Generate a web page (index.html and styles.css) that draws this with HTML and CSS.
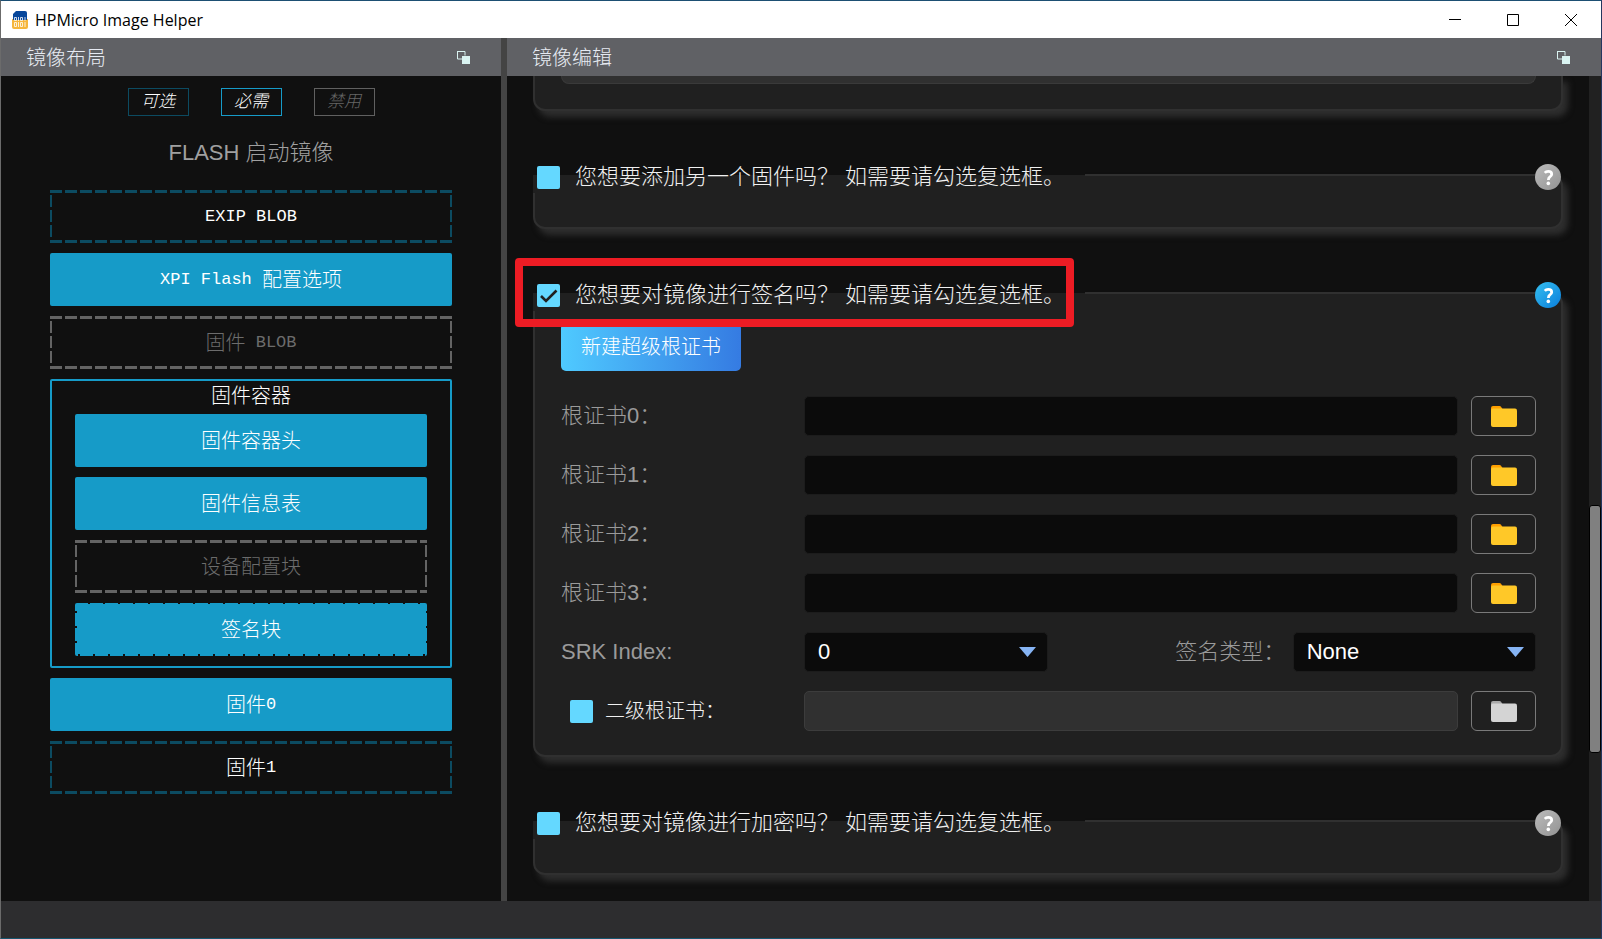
FILE: index.html
```html
<!DOCTYPE html>
<html lang="zh-CN">
<head>
<meta charset="utf-8">
<title>HPMicro Image Helper</title>
<link rel="stylesheet" href="styles.css">
</head>
<body>
<svg class="defs" aria-hidden="true">
  <symbol id="float" viewBox="0 0 13 13">
    <path d="M.5 .5h7.5v4M.5 0v8H5" fill="none" stroke="#d9f3f1"/>
    <path d="M5 5h8v8H5z" fill="#d9f3f1"/>
  </symbol>
  <symbol id="folder" viewBox="0 0 26 21">
    <path class="folder-tab" d="M0 2a2 2 0 0 1 2-2h6.500q1 0 1.500 .8L11.500 3H20v6H0z"/>
    <path class="folder-body" d="M0 4.500Q0 2.500 2 2.500h22q2 0 2 2V19q0 2-2 2H2q-2 0-2-2z"/>
  </symbol>
  <symbol id="help" viewBox="0 0 26 26">
    <path d="M9.800 8.800Q11 7.400 13.200 7.400q3.500 0 3.500 2.800 0 1.500-1.800 2.700-1.500 1.100-1.500 3" fill="none" stroke="#fff" stroke-width="2.800"/>
    <circle cx="13.300" cy="19.400" r="1.800" fill="#fff"/>
  </symbol>
</svg>
<div class="window">
  <header class="titlebar">
    <svg class="app-icon" viewBox="0 0 16 18" aria-hidden="true">
      <path d="M4 0h9q2 0 2 2v6H1V3z" fill="#08479b"/>
      <path d="M0 8h16v8q0 2-2 2H2q-2 0-2-2z" fill="#f6b63c"/>
      <path d="M1 3h14v6H1z" fill="#08479b"/>
      <g fill="none" stroke="#fff" stroke-width=".8">
        <path d="M2.500 6.500h2v3h-2zM6.500 6v4M8.500 6.500h2v3h-2zM13 6v4M2.500 11.500h2v4h-2zM6.500 11v5M8.500 11.500h2v4h-2zM13 11v5"/>
      </g>
    </svg>
    <span class="app-name">HPMicro Image Helper</span>
    <button class="win-btn" aria-label="最小化"><svg width="12" height="12" viewBox="0 0 12 12"><path d="M0 5.500h12" stroke="#000"/></svg></button>
    <button class="win-btn" aria-label="最大化"><svg width="12" height="12" viewBox="0 0 12 12"><path d="M.5 .5h11v11H.5z" fill="none" stroke="#000"/></svg></button>
    <button class="win-btn" aria-label="关闭"><svg width="12" height="12" viewBox="0 0 12 12"><path d="M0 0l12 12M12 0L0 12" stroke="#000"/></svg></button>
  </header>

  <main class="workspace">
    <section class="dock">
      <div class="dock-head">
        <h2 class="dock-title">镜像布局</h2>
        <button class="float-btn" aria-label="浮动"><svg width="13" height="13"><use href="#float"/></svg></button>
      </div>
      <div class="layout-view">
        <div class="legend">
          <span class="tag tag-optional">可选</span>
          <span class="tag tag-required">必需</span>
          <span class="tag tag-disabled">禁用</span>
        </div>
        <h3 class="layout-title">FLASH 启动镜像</h3>
        <div class="blocks">
          <div class="block block-optional"><span class="latin">EXIP BLOB</span></div>
          <div class="block block-filled"><span class="latin">XPI Flash </span>配置选项</div>
          <div class="block block-disabled">固件<span class="latin"> BLOB</span></div>
          <div class="container">
            <div class="container-title">固件容器</div>
            <div class="blocks">
              <div class="block block-filled">固件容器头</div>
              <div class="block block-filled">固件信息表</div>
              <div class="block block-disabled">设备配置块</div>
              <div class="block block-filled block-notched">签名块</div>
            </div>
          </div>
          <div class="block block-filled">固件<span class="latin">0</span></div>
          <div class="block block-optional">固件<span class="latin">1</span></div>
        </div>
      </div>
    </section>

    <div class="splitter"></div>

    <section class="dock">
      <div class="dock-head">
        <h2 class="dock-title">镜像编辑</h2>
        <button class="float-btn" aria-label="浮动"><svg width="13" height="13"><use href="#float"/></svg></button>
      </div>
      <div class="editor">
        <div class="groups">
          <section class="group group-cut"><div class="inner-box"></div></section>

          <section class="group">
            <div class="group-head">
              <label class="group-label"><input class="check" type="checkbox"><span>您想要添加另一个固件吗？</span><span class="hint">如需要请勾选复选框。</span></label>
              <button class="help help-off" aria-label="帮助"><svg width="26" height="26"><use href="#help"/></svg></button>
            </div>
          </section>

          <section class="group">
            <div class="group-head">
              <label class="group-label"><input class="check" type="checkbox" checked><span>您想要对镜像进行签名吗？</span><span class="hint">如需要请勾选复选框。</span></label>
              <button class="help" aria-label="帮助"><svg width="26" height="26"><use href="#help"/></svg></button>
              <div class="marker"></div>
            </div>
            <div class="group-body">
              <button class="primary">新建超级根证书</button>
              <div class="row">
                <label class="field-label" for="c0">根证书0：</label>
                <input class="field" id="c0" type="text">
                <button class="browse" aria-label="浏览"><svg width="26" height="21"><use href="#folder"/></svg></button>
              </div>
              <div class="row">
                <label class="field-label" for="c1">根证书1：</label>
                <input class="field" id="c1" type="text">
                <button class="browse" aria-label="浏览"><svg width="26" height="21"><use href="#folder"/></svg></button>
              </div>
              <div class="row">
                <label class="field-label" for="c2">根证书2：</label>
                <input class="field" id="c2" type="text">
                <button class="browse" aria-label="浏览"><svg width="26" height="21"><use href="#folder"/></svg></button>
              </div>
              <div class="row">
                <label class="field-label" for="c3">根证书3：</label>
                <input class="field" id="c3" type="text">
                <button class="browse" aria-label="浏览"><svg width="26" height="21"><use href="#folder"/></svg></button>
              </div>
              <div class="row row-selects">
                <label class="field-label" for="srk">SRK Index:</label>
                <select class="field select" id="srk"><option>0</option></select>
                <label class="field-label type-label" for="sig">签名类型：</label>
                <select class="field select" id="sig"><option>None</option></select>
              </div>
              <div class="row">
                <label class="sub-label"><input class="check" type="checkbox">二级根证书：</label>
                <input class="field" type="text" aria-label="二级根证书" disabled>
                <button class="browse" aria-label="浏览" disabled><svg width="26" height="21"><use href="#folder"/></svg></button>
              </div>
            </div>
          </section>

          <section class="group">
            <div class="group-head">
              <label class="group-label"><input class="check" type="checkbox"><span>您想要对镜像进行加密吗？</span><span class="hint">如需要请勾选复选框。</span></label>
              <button class="help help-off" aria-label="帮助"><svg width="26" height="26"><use href="#help"/></svg></button>
            </div>
          </section>
        </div>
        <div class="scrollbar"><div class="thumb"></div></div>
      </div>
    </section>
  </main>
  <footer class="statusbar"></footer>
</div>
</body>
</html>
```

FILE: styles.css
```css
:root {
  --bg: #101010;
  --panel: #202020;
  --line: #303030;
  --blue: #169bc8;
  --blue-dim: #0c4b61;
  --gray: #646464;
  --sky: #64d8ff;
}

* { box-sizing: border-box; }

body {
  margin: 0;
  color: #f0f0f0;
  font: 300 20px/24px "Liberation Sans", "Noto Sans CJK SC", sans-serif;
}

button, input, select { font: inherit; color: inherit; margin: 0; }
button { padding: 0; border: 0; background: none; }
svg { display: block; }
h2, h3 { margin: 0; font-weight: 300; }

.defs { position: absolute; width: 0; height: 0; }

.window {
  display: flex;
  flex-direction: column;
  height: 100vh;
  border: 1px solid;
  border-color: #1d4f73 #24375f #17566f #6b6b6b;
  background: var(--bg);
}

/* Title bar */
.titlebar {
  display: flex;
  align-items: center;
  height: 37px;
  padding: 0 1px 0 11px;
  background: #fff;
  color: #000;
}
.app-icon { width: 16px; height: 18px; }
.app-name {
  flex: 1;
  margin-left: 7px;
  font: 400 16px/24px "Open Sans", "Noto Sans", sans-serif;
}
.win-btn {
  display: grid;
  place-items: center;
  width: 58px;
  height: 36px;
}

/* Docks */
.workspace {
  flex: 1;
  min-height: 0;
  display: grid;
  grid-template-columns: minmax(0, 500fr) 6px minmax(0, 1094fr);
}
.splitter { background: #444; }
.dock { display: flex; flex-direction: column; min-height: 0; }
.dock-head {
  display: flex;
  align-items: center;
  justify-content: space-between;
  flex: none;
  height: 38px;
  padding: 0 31px 0 25px;
  background: #606165;
}
.dock-title { padding-top: 2px; font-size: 20px; line-height: 24px; color: #e6eaf2; }
.statusbar { height: 37px; background: #2d2d2f; }

/* Image layout */
.layout-view { padding: 12px 49px 0; text-align: center; }
.legend { display: flex; justify-content: center; gap: 32px; }
.tag {
  width: 61px;
  border: 1px solid;
  font-size: 17px;
  line-height: 26px;
  font-style: italic;
  color: #fff;
}
.tag-optional { border-color: var(--blue-dim); }
.tag-required { border-color: var(--blue); }
.tag-disabled { border-color: #606060; color: #666; }
.layout-title {
  margin: 24px 0;
  font-size: 22px;
  line-height: 26px;
  color: #a0a0a0;
}
.blocks { display: flex; flex-direction: column; gap: 10px; }
.block {
  display: flex;
  align-items: center;
  justify-content: center;
  height: 53px;
  white-space: pre;
  color: #fff;
}
.latin { font-family: "Liberation Mono", monospace; font-size: 17px; font-weight: 400; }
.block-filled { background: var(--blue); border-radius: 2px; }
.block-optional, .block-disabled {
  --dash: var(--blue-dim);
  background:
    repeating-linear-gradient(90deg, var(--dash) 0 12px, transparent 12px 15px) top / 100% 3px no-repeat,
    repeating-linear-gradient(90deg, var(--dash) 0 12px, transparent 12px 15px) bottom / 100% 3px no-repeat,
    linear-gradient(transparent 0 5px, var(--dash) 5px 17px, transparent 17px 20px, var(--dash) 20px 32px, transparent 32px 35px, var(--dash) 35px 47px, transparent 47px 53px) left / 2px 100% no-repeat,
    linear-gradient(transparent 0 5px, var(--dash) 5px 17px, transparent 17px 20px, var(--dash) 20px 32px, transparent 32px 35px, var(--dash) 35px 47px, transparent 47px 53px) right / 2px 100% no-repeat;
}
.block-disabled { --dash: var(--gray); color: #6c6c6c; }
.block-notched {
  background:
    repeating-linear-gradient(90deg, transparent 0 13px, var(--bg) 13px 15px) top / 100% 1px no-repeat,
    repeating-linear-gradient(90deg, transparent 0 3px, var(--bg) 3px 5px, transparent 5px 15px) bottom / 100% 2px no-repeat,
    repeating-linear-gradient(transparent 0 8px, var(--bg) 8px 10px, transparent 10px 15px) left / 2px 100% no-repeat,
    repeating-linear-gradient(transparent 0 8px, var(--bg) 8px 10px, transparent 10px 15px) right / 1px 100% no-repeat,
    var(--blue);
}
.container {
  padding: 3px 23px 10px;
  border: 2px solid var(--blue);
  border-radius: 2px;
}
.container-title { padding-bottom: 6px; color: #fff; }

/* Image editor */
.editor { flex: 1; display: flex; min-height: 0; }
.groups {
  flex: 1;
  display: flex;
  flex-direction: column;
  gap: 63px;
  overflow: hidden;
  padding: 0 26px;
}
.group {
  flex: none;
  min-height: 55px;
  border: 2px solid var(--line);
  border-radius: 12px;
  background: var(--panel);
  box-shadow: 5px 6px 6px #2e2e2e;
}
.group-cut {
  min-height: 35px;
  border-top: 0;
  border-radius: 0 0 12px 12px;
  padding: 0 25px 0 26px;
}
.inner-box {
  height: 8px;
  border: 1px solid #3a3a3a;
  border-top: 0;
  border-radius: 0 0 8px 8px;
  background: #303030;
}
.group-head {
  position: relative;
  display: flex;
  justify-content: space-between;
  align-items: center;
  height: 32px;
  margin: -15px 0 0 -2px;
}
.group-label {
  display: flex;
  align-items: center;
  height: 32px;
  padding: 0 20px 0 4px;
  background: linear-gradient(var(--bg) 0 14px, var(--panel) 14px);
  font-size: 22px;
  line-height: 26px;
  white-space: nowrap;
}
.hint { margin-left: 6px; }
.check {
  appearance: none;
  flex: none;
  width: 23px;
  height: 23px;
  margin-right: 15px;
  border-radius: 2px;
  background: var(--sky);
}
.check:checked {
  background: var(--sky) url("data:image/svg+xml,%3Csvg xmlns='http://www.w3.org/2000/svg' viewBox='0 0 23 23'%3E%3Cpath d='M4 12l5 5L19.500 6.500' fill='none' stroke='%23202020' stroke-width='2.600'/%3E%3C/svg%3E");
}
.help {
  border-radius: 50%;
  background: linear-gradient(135deg, #35bff0, #0a7edb);
}
.help-off { background: linear-gradient(135deg, #bcbcbc, #929292); }
.marker {
  position: absolute;
  left: -18px;
  top: -21px;
  width: 559px;
  height: 69px;
  border: 8px solid #ed1c24;
  border-radius: 4px;
  pointer-events: none;
}
.group-body {
  display: flex;
  flex-direction: column;
  gap: 19px;
  padding: 12px 25px 24px 26px;
}
.primary {
  align-self: flex-start;
  height: 48px;
  margin-bottom: 6px;
  padding: 0 20px;
  border-radius: 5px;
  background: linear-gradient(90deg, #4fcaff, #357be2);
  color: #fff;
}
.row {
  display: grid;
  grid-template-columns: 230px minmax(0, 1fr) 65px;
  column-gap: 13px;
  align-items: center;
  height: 40px;
}
.row-selects { grid-template-columns: 230px minmax(0, 244fr) minmax(0, 218fr) minmax(0, 243fr); }
.field-label { font-size: 22px; line-height: 26px; color: #9a9a9a; }
.type-label { padding-left: 114px; white-space: nowrap; }
.sub-label { display: flex; align-items: center; padding-left: 9px; white-space: nowrap; }
.sub-label .check { margin-right: 12px; }
.field {
  width: 100%;
  height: 40px;
  padding: 0 13px;
  border: 1px solid #1c1c1c;
  border-radius: 5px;
  background: #0b0b0b;
  color: #fff;
  font-size: 22px;
}
.field:disabled { border-color: #3c3c3c; background: #303030; }
.select {
  appearance: none;
  background: #0b0b0b url("data:image/svg+xml,%3Csvg xmlns='http://www.w3.org/2000/svg' width='17' height='10'%3E%3Cpath d='M0 0h17L8.500 10z' fill='%2386b4f4'/%3E%3C/svg%3E") right 11px center no-repeat;
}
.browse {
  display: grid;
  place-items: center;
  height: 40px;
  border: 1px solid #7a7a7a;
  border-radius: 6px;
  color: #ffc828;
}
.folder-tab { fill: #ffa000; }
.folder-body { fill: currentColor; }
.browse:disabled { color: #d4d4d4; }
.browse:disabled svg { filter: grayscale(1); }

.scrollbar {
  flex: none;
  display: grid;
  grid-template-rows: 429fr 248fr 148fr;
  width: 12px;
  background: #212121;
}
.thumb {
  grid-row: 2;
  border: 1px solid #000;
  border-radius: 3px;
  background: #808080;
}
```
